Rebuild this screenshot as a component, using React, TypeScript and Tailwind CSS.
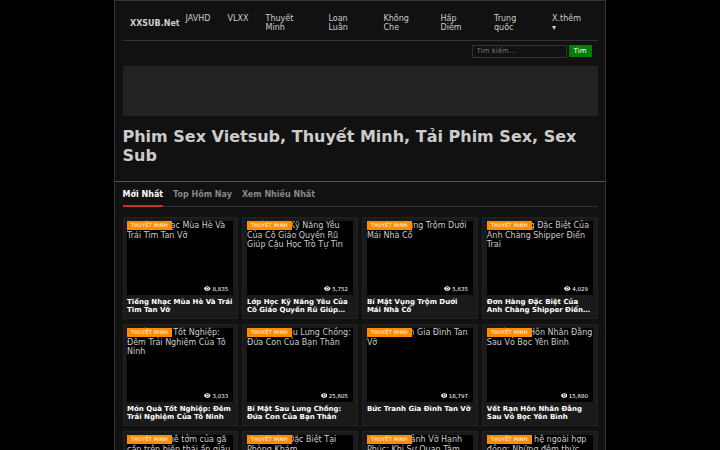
type Video = { alt: string; title: string; views: string }

const menu = [
  { label: 'JAVHD', width: 'w-[42px]' },
  { label: 'VLXX', width: 'w-[38px]' },
  { label: 'Thuyết\nMinh', width: 'w-[63px]' },
  { label: 'Loạn\nLuân', width: 'w-[55px]' },
  { label: 'Không\nChe', width: 'w-[57px]' },
  { label: 'Hấp\nDiêm', width: 'w-[53.500px]' },
  { label: 'Trung\nquốc', width: 'w-[58px]' },
  { label: 'X.thêm\n▾', width: 'w-[40px]' },
]

const videos: Video[] = [
  { alt: 'Tiếng Nhạc Mùa Hè Và\nTrái Tim Tan Vỡ', title: 'Tiếng Nhạc Mùa Hè Và Trái\nTim Tan Vỡ', views: '8,835' },
  { alt: 'Lớp Học Kỹ Năng Yêu\nCủa Cô Giáo Quyến Rũ\nGiúp Cậu Học Trò Tự Tin', title: 'Lớp Học Kỹ Năng Yêu Của\nCô Giáo Quyến Rũ Giúp…', views: '5,752' },
  { alt: 'Bí Mật Vụng Trộm Dưới\nMái Nhà Cổ', title: 'Bí Mật Vụng Trộm Dưới\nMái Nhà Cổ', views: '5,635' },
  { alt: 'Đơn Hàng Đặc Biệt Của\nAnh Chàng Shipper Điển\nTrai', title: 'Đơn Hàng Đặc Biệt Của\nAnh Chàng Shipper Điển…', views: '4,029' },
  { alt: 'Món Quà Tốt Nghiệp:\nĐêm Trải Nghiệm Của Tô\nNinh', title: 'Món Quà Tốt Nghiệp: Đêm\nTrải Nghiệm Của Tô Ninh', views: '3,033' },
  { alt: 'Bí Mật Sau Lưng Chồng:\nĐứa Con Của Bạn Thân', title: 'Bí Mật Sau Lưng Chồng:\nĐứa Con Của Bạn Thân', views: '25,605' },
  { alt: 'Bức Tranh Gia Đình Tan\nVỡ', title: 'Bức Tranh Gia Đình Tan Vỡ', views: '18,797' },
  { alt: 'Vết Rạn Hôn Nhân Đằng\nSau Vỏ Bọc Yên Bình', title: 'Vết Rạn Hôn Nhân Đằng\nSau Vỏ Bọc Yên Bình', views: '15,680' },
  { alt: 'Bí mật ghê tởm của gã\ncấp trên biến thái ẩn giấu', title: 'Bí mật ghê tởm của gã', views: '9,120' },
  { alt: 'Chuyện Đặc Biệt Tại\nPhòng Khám', title: 'Chuyện Đặc Biệt Tại', views: '8,412' },
  { alt: 'Những Mảnh Vỡ Hạnh\nPhúc: Khi Sự Quan Tâm', title: 'Những Mảnh Vỡ Hạnh Phúc', views: '7,305' },
  { alt: 'Mối quan hệ ngoài hợp\nđồng: Những đêm thức', title: 'Mối quan hệ ngoài hợp đồng', views: '6,947' },
]

const Eye = () => (
  <svg className="h-[5px] w-[6.500px] shrink-0" viewBox="0 0 14 10" fill="currentColor">
    <path fillRule="evenodd" d="M7 0C3.800 0 1.200 2 0 5c1.200 3 3.800 5 7 5s5.800-2 7-5c-1.200-3-3.800-5-7-5Zm0 8.200a3.200 3.200 0 1 1 0-6.400 3.200 3.200 0 0 1 0 6.400Z" />
    <circle cx="7" cy="5" r="1.900" />
  </svg>
)

const Header = () => (
  <>
    <nav className="flex h-[40px] border-b border-[#333] pt-[12.500px] text-[8px] leading-[9.600px] text-[#ccc]">
      <a className="w-[63px] shrink-0 pt-[5px] pl-[7.500px] font-bold">XXSUB.Net</a>
      {menu.map(item => (
        <a key={item.label} className={`shrink-0 whitespace-pre ${item.width}`}>
          {item.label}
        </a>
      ))}
    </nav>
    <form className="mt-1 flex h-[13px] justify-end gap-[2px] pr-[6px] text-[7px]">
      <input className="w-[95px] border border-[#333] bg-[#111] px-1 placeholder:text-[#757575]" placeholder="Tìm kiếm..." />
      <button type="button" className="h-3 w-[23px] bg-[#008000] text-[7px] leading-3 text-white">Tìm</button>
    </form>
  </>
)

const Tabs = () => (
  <div className="flex h-[25px] gap-[10px] border-b border-[#333] text-[8px] leading-[25px] font-bold text-[#888]">
    <a className="h-[25px] border-b-2 border-[#c9302c] text-white">Mới Nhất</a>
    <a>Top Hôm Nay</a>
    <a>Xem Nhiều Nhất</a>
  </div>
)

const Card = ({ video }: { video: Video }) => (
  <article className="h-[102px] border border-[#222] bg-[#1a1a1a] px-[3.500px] pt-[3.200px]">
    <div className="relative h-[73.600px] bg-black text-[8px] leading-[9.600px] text-[#ccc]">
      <p className="indent-[8px] whitespace-pre">{video.alt}</p>
      <span className="absolute top-0 left-0 h-[9px] w-[45px] bg-[#ff8c00] text-center text-[5px] leading-[9px] tracking-[0.200px] text-white">
        THUYẾT MINH
      </span>
      <span className="absolute right-[5px] bottom-[2px] flex items-center gap-[1.500px] text-[5.500px] leading-[8px] text-white">
        <Eye />
        {video.views}
      </span>
    </div>
    <h3 className="mt-[3.700px] text-[7px] leading-[8px] font-bold whitespace-pre text-white">{video.title}</h3>
  </article>
)

export default function App() {
  return (
    <div className="h-[450px] overflow-hidden bg-black font-['DejaVu_Sans',sans-serif]">
      <main className="ml-[114px] w-[492px] border border-[#333] bg-[#111]">
        <div className="h-[181px] border-b border-[#555] px-[7.500px]">
          <Header />
          <div className="mt-[8px] h-[50px] bg-[#222]" />
          <h1 className="mt-[11px] text-[16px] leading-[19px] font-bold text-[#ccc]">
            Phim Sex Vietsub, Thuyết Minh, Tải Phim Sex, Sex Sub
          </h1>
        </div>
        <div className="px-[7.500px]">
          <Tabs />
          <div className="mt-[10px] grid grid-cols-4 gap-x-[4.800px] gap-y-[5px]">
            {videos.map(video => (
              <Card key={video.alt} video={video} />
            ))}
          </div>
        </div>
      </main>
    </div>
  )
}
